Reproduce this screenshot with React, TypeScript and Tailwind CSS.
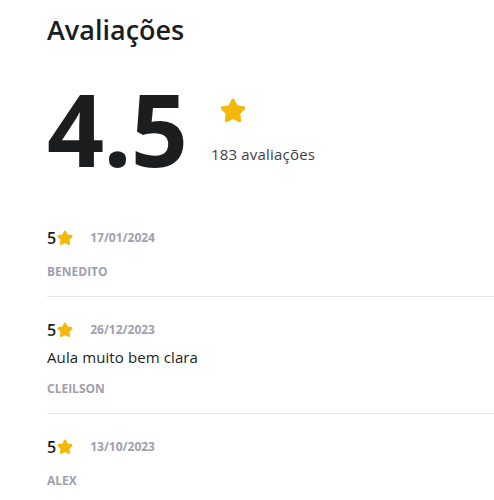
import React from 'react';
import { Star } from 'lucide-react';

interface Review {
  rating: number;
  date: string;
  comment?: string;
  author: string;
}

const reviews: Review[] = [
  { rating: 5, date: '17/01/2024', author: 'BENEDITO' },
  { rating: 5, date: '26/12/2023', comment: 'Aula muito bem clara', author: 'CLEILSON' },
  { rating: 5, date: '13/10/2023', author: 'ALEX' },
];

const StarIcon: React.FC<{ className: string }> = ({ className }) => (
  <Star className={className} fill="#f2b90c" stroke="#f2b90c" strokeWidth={2.5} strokeLinejoin="round" />
);

const App: React.FC = () => {
  return (
    <div className="min-h-[500px] bg-white pl-[47px] pt-[12px] font-['Open_Sans',sans-serif] text-[#1c1d1f] overflow-hidden">
      {/* Title */}
      <h2 className="text-[27px] font-semibold leading-[36px]">Avaliações</h2>

      {/* Average */}
      <div className="mt-[30px] flex items-start">
        <span className="text-[100px] font-bold leading-[100px] tracking-[-1px]">4.5</span>
        <div className="ml-[24px] mt-[20px] flex flex-col items-start">
          <StarIcon className="ml-[9px] h-[26px] w-[26px]" />
          <span className="mt-[18px] text-[15px] leading-[24px] tracking-[0.2px] text-[#3e4147]">183 avaliações</span>
        </div>
      </div>

      {/* Reviews list */}
      <div className="mt-[27px]">
        {reviews.map((r, i) => (
          <div key={i} className={`pt-[21px] pb-[16px] ${i < reviews.length - 1 ? 'border-b border-[#e4e4e4]' : ''}`}>
            <div className="flex items-center">
              <span className="text-[16px] font-semibold leading-[24px]">{r.rating}</span>
              <StarIcon className="ml-[1px] h-[16px] w-[16px]" />
              <span className="ml-[17px] text-[12px] font-bold text-[#a0a0ac]">{r.date}</span>
            </div>
            {r.comment && (
              <p className="mt-[3px] text-[15px] leading-[24px] tracking-[0.1px] text-[#1c1d1f]">{r.comment}</p>
            )}
            <p className={`${r.comment ? 'mt-[12px]' : 'mt-[14px]'} text-[12px] font-bold leading-[16px] text-[#a0a0ac]`}>{r.author}</p>
          </div>
        ))}
      </div>
    </div>
  );
};

export default App;
